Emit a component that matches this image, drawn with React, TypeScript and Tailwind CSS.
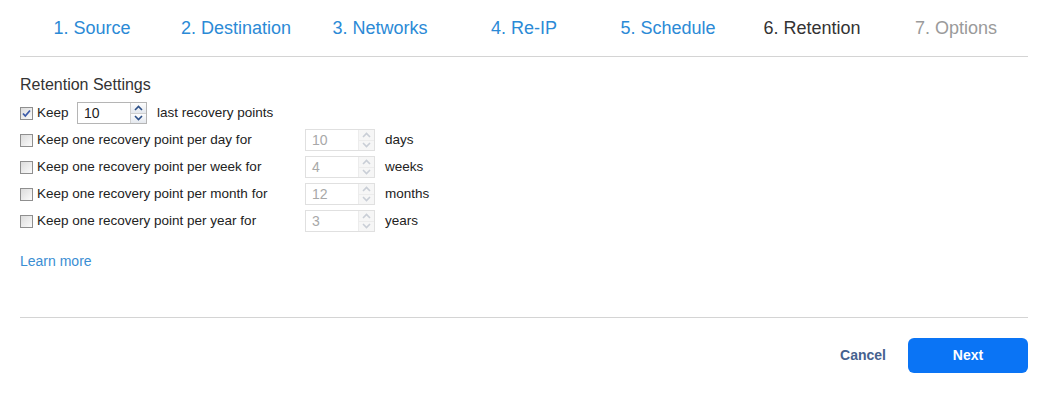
import React from "react"

const steps = [
  { label: "1. Source", state: "done" },
  { label: "2. Destination", state: "done" },
  { label: "3. Networks", state: "done" },
  { label: "4. Re-IP", state: "done" },
  { label: "5. Schedule", state: "done" },
  { label: "6. Retention", state: "active" },
  { label: "7. Options", state: "todo" },
]

const periods = [
  { label: "Keep one recovery point per day for", value: "10", unit: "days" },
  { label: "Keep one recovery point per week for", value: "4", unit: "weeks" },
  { label: "Keep one recovery point per month for", value: "12", unit: "months" },
  { label: "Keep one recovery point per year for", value: "3", unit: "years" },
]

function Checkbox({ checked }: { checked?: boolean }) {
  return (
    <span className="relative inline-block w-[13px] h-[13px] shrink-0 border border-[#8f8f8f] bg-gradient-to-br from-[#dcdcdc] to-[#fbfbfb]">
      {checked && (
        <svg viewBox="0 0 11 11" className="absolute inset-0 w-[11px] h-[11px]">
          <path d="M2 5.5 L4.3 8 L9 2.5" fill="none" stroke="#3b5aa8" strokeWidth="1.8" />
        </svg>
      )}
    </span>
  )
}

function Spinner({ value, disabled }: { value: string; disabled?: boolean }) {
  const arrow = disabled ? "#c9ced6" : "#2c4f87"
  return (
    <div
      className={`flex w-[70px] h-[22px] border ${
        disabled ? "border-[#e0e0e0] text-[#a8a8a8]" : "border-[#b5b5b5] text-[#222]"
      }`}
    >
      <span className="flex-1 flex items-center pl-[6px] text-[14px]">{value}</span>
      <span className={`flex flex-col w-[16px] border-l ${disabled ? "border-[#ececec]" : "border-[#d0d0d0]"}`}>
        <span className={`flex-1 flex items-center justify-center ${disabled ? "bg-[#f6f6f6]" : "bg-gradient-to-b from-[#fdfdfd] to-[#e4e8ee]"}`}>
          <svg viewBox="0 0 9 6" className="w-[9px] h-[6px]">
            <path d="M1 5 L4.5 1.5 L8 5" fill="none" stroke={arrow} strokeWidth="1.6" />
          </svg>
        </span>
        <span className={`flex-1 flex items-center justify-center border-t ${disabled ? "bg-[#f6f6f6] border-[#ececec]" : "bg-gradient-to-b from-[#fdfdfd] to-[#e4e8ee] border-[#d0d0d0]"}`}>
          <svg viewBox="0 0 9 6" className="w-[9px] h-[6px]">
            <path d="M1 1 L4.5 4.5 L8 1" fill="none" stroke={arrow} strokeWidth="1.6" />
          </svg>
        </span>
      </span>
    </div>
  )
}

export default function App() {
  return (
    <div className="w-[1048px] h-[394px] bg-white px-[20px] font-['Liberation_Sans',Arial,sans-serif]">
      <div className="grid grid-cols-7 h-[57px] items-center border-b border-[#d4d4d4]">
        {steps.map((s) => (
          <div
            key={s.label}
            className={`text-center text-[18px] ${
              s.state === "active" ? "text-[#333]" : s.state === "todo" ? "text-[#9a9a9a]" : "text-[#2b8ad6]"
            }`}
          >
            {s.label}
          </div>
        ))}
      </div>

      <div className="pt-[18px] h-[261px] border-b border-[#d4d4d4]">
        <h2 className="text-[16px] leading-[20px] text-[#333]">Retention Settings</h2>
        <div className="mt-[7px] flex flex-col gap-[5px] text-[13.5px] text-[#222]">
          <div className="flex items-center h-[22px]">
            <Checkbox checked />
            <span className="ml-[4px] w-[40px]">Keep</span>
            <Spinner value="10" />
            <span className="ml-[10px]">last recovery points</span>
          </div>
          {periods.map((p) => (
            <div key={p.unit} className="flex items-center h-[22px]">
              <Checkbox />
              <span className="ml-[4px] w-[268px]">{p.label}</span>
              <Spinner value={p.value} disabled />
              <span className="ml-[10px]">{p.unit}</span>
            </div>
          ))}
        </div>
        <a className="block mt-[21px] text-[14px] leading-[16px] text-[#3a8ed3]">Learn more</a>
      </div>

      <div className="flex items-center justify-end pt-[20px] gap-[22px]">
        <button className="text-[14px] font-bold text-[#46628f]">Cancel</button>
        <button className="w-[120px] h-[35px] rounded-[6px] bg-[#0a74f5] text-white text-[14px] font-bold">Next</button>
      </div>
    </div>
  )
}
